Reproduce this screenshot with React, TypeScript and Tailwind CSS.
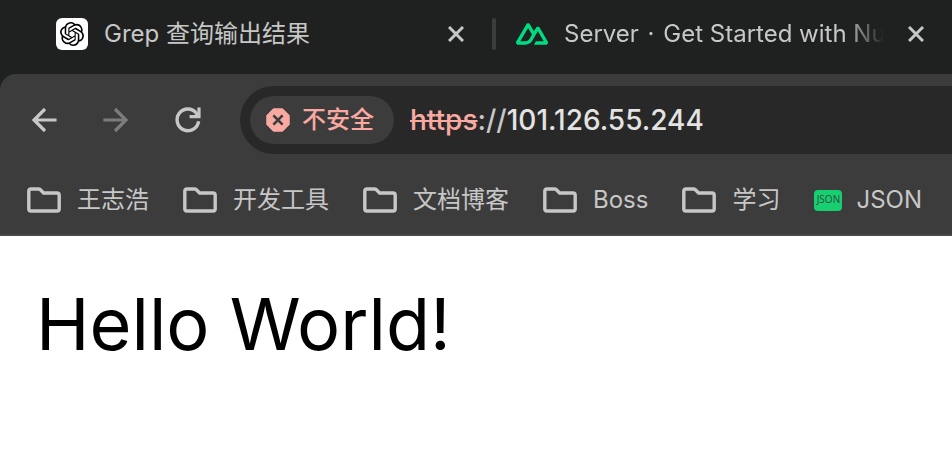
import { SiOpenai } from "react-icons/si";

const uiFont = "font-['Inter','Noto_Sans_CJK_SC',sans-serif]";

function CloseButton({ label }: { label: string }) {
  return (
    <button type="button" aria-label={label} className="flex size-8 shrink-0 items-center justify-center">
      <svg viewBox="0 0 16 16" className="size-4" fill="none" stroke="currentColor" strokeWidth="3">
        <path d="M1 1L15 15M15 1L1 15" />
      </svg>
    </button>
  );
}

function NuxtLogo() {
  return (
    <svg viewBox="0 150 900 600" className="h-6 w-8 shrink-0" fill="#00dc82" aria-hidden="true">
      <path d="M504.908 750H839.476C850.103 750.001 860.542 747.229 869.745 741.963C878.948 736.696 886.589 729.121 891.9 719.999C897.211 710.876 900.005 700.529 900 689.997C899.995 679.465 897.193 669.12 891.873 660.002L667.187 274.289C661.876 265.169 654.237 257.595 645.036 252.329C635.835 247.064 625.398 244.291 614.773 244.291C604.149 244.291 593.711 247.064 584.511 252.329C575.31 257.595 567.67 265.169 562.36 274.289L504.908 372.979L392.581 179.993C387.266 170.874 379.623 163.301 370.42 158.036C361.216 152.772 350.777 150 340.151 150C329.525 150 319.086 152.772 309.883 158.036C300.679 163.301 293.036 170.874 287.721 179.993L8.126 660.002C2.807 669.12 0.005 679.465 0 689.997C-0.005 700.529 2.789 710.876 8.1 719.999C13.411 729.121 21.052 736.696 30.255 741.963C39.458 747.229 49.897 750.001 60.524 750H270.538C353.748 750 415.112 713.775 457.336 643.101L559.849 467.145L614.757 372.979L779.547 655.834H559.849L504.908 750ZM267.114 655.737L120.551 655.704L340.249 278.586L449.87 467.145L376.474 593.175C348.433 639.03 316.577 655.737 267.114 655.737Z" />
    </svg>
  );
}

function ArrowIcon({ direction }: { direction: "back" | "forward" }) {
  return (
    <svg viewBox="0 0 28 28" className="size-7" fill="none" stroke="currentColor" strokeWidth="3.2" aria-hidden="true">
      <path d={direction === "back" ? "M26.6 14H4M15 3L4 14L15 25" : "M1.4 14H24M13 3L24 14L13 25"} />
    </svg>
  );
}

function ReloadIcon() {
  return (
    <svg viewBox="0 0 28 28" className="size-7" fill="none" stroke="currentColor" aria-hidden="true">
      <path d="M24.6 15.2A10.8 10.8 0 1 1 22.4 7.2" strokeWidth="3.4" />
      <path d="M25 1.4V10.6H15.6" strokeWidth="3.2" />
      <path d="M20 10L23.6 6.4V10Z" fill="currentColor" strokeWidth="1" />
    </svg>
  );
}

function FolderIcon() {
  return (
    <svg viewBox="0 0 34 26" className="h-[26px] w-[34px] shrink-0" fill="none" stroke="currentColor" strokeWidth="3.4" strokeLinejoin="round" aria-hidden="true">
      <path d="M4 2H11.5Q12.6 2 13.4 2.8L16.6 6H30Q32.2 6 32.2 8.2V21.8Q32.2 24 30 24H4Q1.8 24 1.8 21.8V4.2Q1.8 2 4 2Z" />
    </svg>
  );
}

function DangerIcon() {
  return (
    <svg viewBox="0 0 24 24" className="size-6 shrink-0" aria-hidden="true">
      <path d="M7.4 .8H16.6L23.2 7.4V16.6L16.6 23.2H7.4L.8 16.6V7.4Z" fill="#f8a9a1" stroke="#f8a9a1" strokeLinejoin="round" />
      <path d="M7.4 7.4L16.6 16.6M16.6 7.4L7.4 16.6" stroke="#3c3c3c" strokeWidth="2.6" />
    </svg>
  );
}

const folders = ["王志浩", "开发工具", "文档博客", "Boss", "学习"];

export default function App() {
  return (
    <div className={`flex min-h-screen flex-col overflow-hidden bg-white text-[#c7c7c7] ${uiFont}`}>
      <header className="bg-[#1f2120]">
        <div className="flex h-[74px] items-center pb-1.5 pl-14 pr-5">
          <div className="flex w-[416px] shrink-0 items-center">
            <span className="flex size-8 shrink-0 items-center justify-center rounded-md bg-white text-black">
              <SiOpenai className="size-6" />
            </span>
            <span className="ml-4 flex-1 truncate text-2xl">Grep 查询输出结果</span>
            <CloseButton label="关闭 Grep 查询输出结果" />
          </div>
          <div className="mx-5 h-8 w-1 shrink-0 rounded-full bg-[#3c3c3c]" />
          <div className="flex min-w-0 flex-1 items-center">
            <NuxtLogo />
            <span className="ml-4 min-w-0 flex-1 overflow-hidden whitespace-nowrap text-2xl [mask-image:linear-gradient(to_right,black_calc(100%-40px),transparent)]">
              Server <span className="mx-0.5">·</span> Get Started with Nuxt
            </span>
            <span className="ml-4 flex">
              <CloseButton label="关闭 Server" />
            </span>
          </div>
        </div>

        <div className="rounded-tl-2xl border-b-2 border-[#484848] bg-[#3c3c3c]">
          <nav className="flex items-center pl-6 pt-3" aria-label="导航">
            <button type="button" aria-label="返回" className="flex size-10 items-center justify-center">
              <ArrowIcon direction="back" />
            </button>
            <button type="button" aria-label="前进" disabled className="ml-8 flex size-10 items-center justify-center text-[#7c7c7c]">
              <ArrowIcon direction="forward" />
            </button>
            <button type="button" aria-label="重新加载" className="ml-8 flex size-10 items-center justify-center">
              <ReloadIcon />
            </button>
            <div className="ml-8 flex h-[68px] min-w-0 flex-1 items-center rounded-l-full bg-[#282828] pl-2.5 text-[28px] font-medium">
              <button type="button" className="flex h-12 shrink-0 items-center gap-3 rounded-full bg-[#3c3c3c] pl-4 pr-5 text-2xl text-[#f8a9a1]">
                <DangerIcon />
                不安全
              </button>
              <label htmlFor="address" className="ml-4 shrink-0">
                <span className="text-[#f8a9a1] line-through decoration-2">https</span>://
              </label>
              <input id="address" type="text" defaultValue="101.126.55.244" className="min-w-0 flex-1 bg-transparent text-[#e3e3e3] outline-none" />
            </div>
          </nav>

          <nav className="flex h-20 items-center gap-[34px] overflow-hidden whitespace-nowrap pl-[27px] pt-3 text-2xl" aria-label="书签">
            {folders.map((name) => (
              <button key={name} type="button" className="flex shrink-0 items-center gap-4">
                <FolderIcon />
                {name}
              </button>
            ))}
            <a href="#json" className="flex shrink-0 items-center gap-3.5">
              <span className="flex h-[21px] w-7 items-center justify-center rounded bg-[#16cf70] font-['Open_Sans',sans-serif] text-[10px] text-[#33493d]">JSON</span>
              JSON
            </a>
          </nav>
        </div>
      </header>

      <main className="flex-1 px-9 pt-11 text-black">
        <p className="text-[72px] leading-[88px]">Hello World!</p>
      </main>
    </div>
  );
}
